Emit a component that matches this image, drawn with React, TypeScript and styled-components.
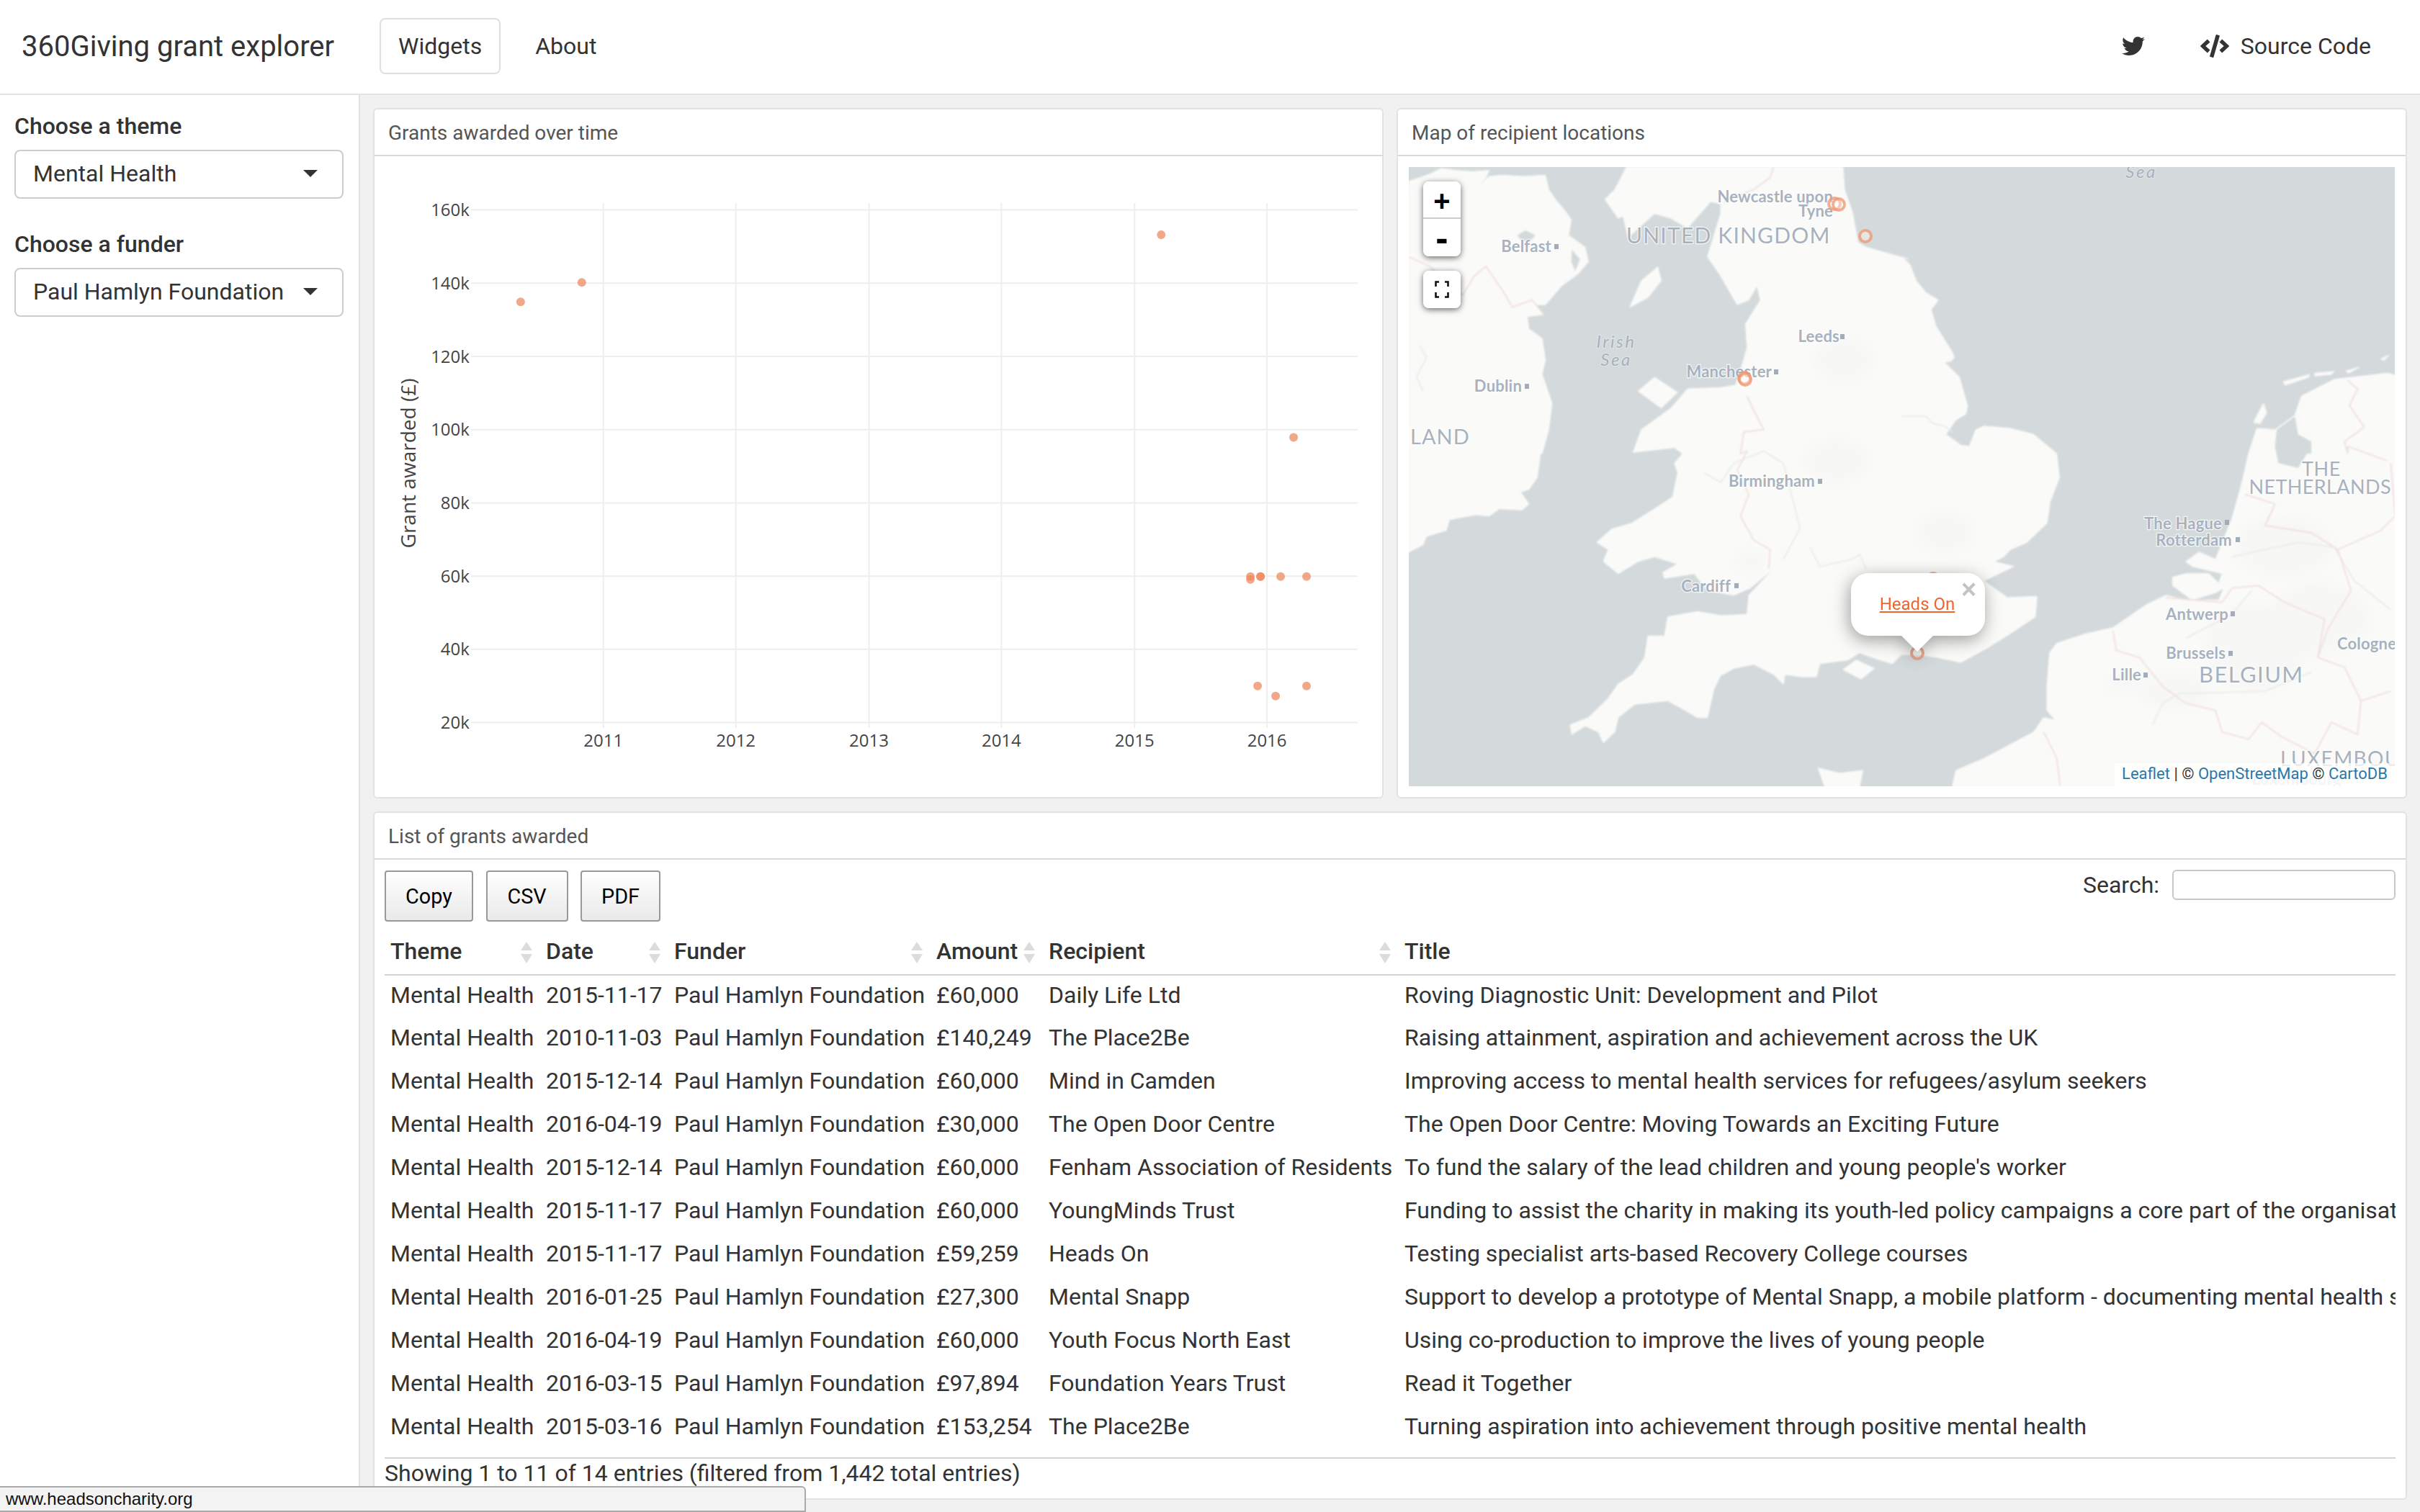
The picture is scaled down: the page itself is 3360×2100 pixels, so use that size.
import React from 'react';
import styled, { createGlobalStyle } from 'styled-components';
import { FaTwitter, FaCode } from 'react-icons/fa';

const GlobalStyle = createGlobalStyle`
  html, body { margin: 0; padding: 0; width: 3360px; height: 2100px; overflow: hidden; background: #fff; }
  * { box-sizing: border-box; }
  body { font-family: Roboto, "Liberation Sans", sans-serif; color: #333; font-size: 32px; }
`;

const Page = styled.div`width: 3360px; height: 2100px; display: flex; flex-direction: column; position: relative;`;
const Navbar = styled.header`
  height: 132px; flex: none; display: flex; align-items: center; padding: 0 42px 2px 30px;
  background: #fff; border-bottom: 2px solid #e2e2e2;
`;
const Brand = styled.div`font-size: 40px; color: #333; width: 497px; flex: none; line-height: 48px; padding-top: 1px;`;
const NavItem = styled.a<{ $active?: boolean; $mr?: number }>`
  font-size: 32px; line-height: 48px; height: 78px; display: flex; align-items: center; gap: 16px; padding: 0 24px; color: #333;
  border: 2px solid ${p => (p.$active ? '#dfdfdf' : 'transparent')}; border-radius: 8px; margin-right: ${p => p.$mr || 0}px;
  svg { fill: #333; }
`;
const NavSpacer = styled.div`flex: 1;`;
const Body = styled.div`flex: 1; display: flex; min-height: 0;`;
const Sidebar = styled.aside`width: 500px; flex: none; border-right: 2px solid #e2e2e2; background: #fff; padding: 20px 20px 0;`;
const Field = styled.div`margin-bottom: 40px;`;
const FieldLabel = styled.label`display: block; font-size: 32px; line-height: 46px; font-weight: 500; color: #333; margin-bottom: 10px;`;
const Select = styled.div`
  width: 457px; height: 68px; border: 2px solid #ccc; border-radius: 8px; background: #fff; padding: 0 26px 2px 24px;
  display: flex; align-items: center; justify-content: space-between; font-size: 32px; color: #333;
`;
const Caret = styled.span`width: 0; height: 0; border-left: 10px solid transparent; border-right: 10px solid transparent; border-top: 10px solid #333; margin-right: 8px;`;
const Main = styled.main`
  flex: 1; background: #f1f1f1; padding: 18px 18px 17px; display: grid; gap: 18px;
  grid-template-columns: 1fr 1fr; grid-template-rows: 959px 956px;
`;
const Card = styled.section<{ $wide?: boolean }>`
  background: #fff; border: 2px solid #e2e2e2; border-radius: 6px; display: flex; flex-direction: column; min-width: 0; min-height: 0;
  ${p => (p.$wide ? 'grid-column: 1 / span 2;' : '')}
`;
const CardHeader = styled.h2`
  margin: 0; flex: none; height: 65px; padding: 0 19px; font-size: 28px; font-weight: 400; color: #555;
  line-height: 66px; border-bottom: 2px solid #d9d9d9;
`;
const ChartSvg = styled.svg`flex: 1; display: block; width: 100%; min-height: 0;`;
const MapBody = styled.div`flex: 1; padding: 15px 15px 15px 15px; display: flex; min-height: 0;`;
const MapView = styled.div`flex: 1; position: relative; overflow: hidden; background: #d4dadc;`;
const MapSvg = styled.svg`position: absolute; inset: 0; width: 1370px; height: 860px; display: block;`;
const Controls = styled.div`position: absolute; left: 20px; top: 20px; width: 52px; display: flex; flex-direction: column; gap: 20px;`;
const ControlGroup = styled.div`background: #fff; border-radius: 8px; box-shadow: 0 2px 8px rgba(0,0,0,.6); display: flex; flex-direction: column; overflow: hidden;`;
const ControlButton = styled.button<{ $divider?: boolean; $size?: number }>`
  border: 0; padding: ${p => (p.$divider ? '4px' : '0')} 0 0; margin: 0; background: #fff; width: 52px; height: 52px; font-family: "Liberation Sans", sans-serif;
  font-size: ${p => p.$size || 40}px; font-weight: 700; color: #000; line-height: 52px;
  display: flex; align-items: center; justify-content: center;
  border-bottom: ${p => (p.$divider ? '2px solid #ccc' : '0')};
`;
const Popup = styled.div`
  position: absolute; left: 614px; top: 564px; width: 186px; height: 87px; background: #fff; border-radius: 24px;
  display: flex; align-items: center; justify-content: center; padding: 0 2px 0 0;
  filter: drop-shadow(-2px 6px 12px rgba(0,0,0,.38));
  &::after { content: ""; position: absolute; left: 70px; top: 87px; width: 0; height: 0; border-left: 22px solid transparent; border-right: 22px solid transparent; border-top: 22px solid #fff; }
`;
const PopupLink = styled.a`font-size: 24px; color: #f0652c; text-decoration: underline; line-height: 32px; margin-top: -2px;`;
const PopupClose = styled.span`position: absolute; right: 12px; top: 5px; font-family: "Liberation Sans", sans-serif; font-size: 36px; line-height: 36px; font-weight: 700; color: #c3c3c3;`;
const Attribution = styled.div`
  position: absolute; right: 0; bottom: 0; height: 32px; padding: 0 10px; background: rgba(255,255,255,.75);
  font-size: 22px; line-height: 30px; color: #333; white-space: nowrap;
`;
const AttribLink = styled.a`color: #2a78a8;`;
const TableBody = styled.div`flex: 1; padding: 15px 14px 0; display: flex; flex-direction: column; min-height: 0;`;
const Toolbar = styled.div`display: flex; justify-content: space-between; align-items: flex-start; height: 85px; flex: none;`;
const ButtonRow = styled.div`display: flex; gap: 17.5px;`;
const ExportButton = styled.button<{ $w: number }>`
  width: ${p => p.$w}px; height: 71px; border: 2px solid #999; border-radius: 4px; padding: 0; color: #000;
  background: linear-gradient(to bottom, #fff 0%, #e9e9e9 100%); font-family: Roboto, sans-serif; font-size: 28.8px;
`;
const SearchBox = styled.label`display: flex; align-items: center; gap: 18px; font-size: 32px; color: #333; margin-top: -1px;`;
const SearchInput = styled.input`width: 310px; height: 42px; border: 2px solid #c8c8c8; border-radius: 6px; background: #fff;`;
const TableClip = styled.div`flex: none; height: 732px; overflow: hidden; border-bottom: 2px solid #d4d4d4;`;
const Table = styled.table`width: 2792px; table-layout: fixed; border-collapse: collapse; font-size: 32px; color: #333;`;
const HeadCell = styled.th<{ $w?: number; $sort?: boolean }>`
  ${p => (p.$w ? `width: ${p.$w}px;` : '')}
  position: relative; height: 60px; padding: 0 8px 6px; text-align: left; font-weight: 500; color: #333; border-bottom: 2px solid #d4d4d4; white-space: nowrap;
  ${p => p.$sort ? `
    &::before { content: ""; position: absolute; right: 11px; top: 14px; width: 0; height: 0; border-left: 8px solid transparent; border-right: 8px solid transparent; border-bottom: 12px solid #dcdcdc; }
    &::after { content: ""; position: absolute; right: 11px; top: 31px; width: 0; height: 0; border-left: 8px solid transparent; border-right: 8px solid transparent; border-top: 13px solid #dcdcdc; }
  ` : ''}
`;
const Cell = styled.td`height: 60px; padding: 0 8px 6px; white-space: nowrap; overflow: hidden;`;
const Footer = styled.div`font-size: 32px; line-height: 40px; padding-top: 0; color: #333;`;
const StatusBar = styled.div`
  position: absolute; left: 0; bottom: 0; width: 1119px; height: 36px; background: #f3f3f3; border: 2px solid #aaa; border-left: 0; border-radius: 0 6px 0 0;
  font-family: "Liberation Sans", sans-serif; font-size: 24px; line-height: 32px; color: #111; padding-left: 8px;
`;

/* ---------- chart ---------- */
const yTicks = [160, 140, 120, 100, 80, 60, 40, 20];
const yOf = (v: number) => 291.5 + ((160 - v) / 20) * 101.6;
const xTicks: [string, number][] = [['2011', 838], ['2012', 1022], ['2013', 1207], ['2014', 1391], ['2015', 1576], ['2016', 1760]];
const dots: [number, number][] = [[723, 419], [808, 392], [1613, 326], [1797, 607], [1737, 800], [1737, 804], [1751, 800], [1751, 800], [1779, 800], [1815, 800], [1747, 952], [1772, 966], [1815, 952]];

const Chart = () => (
  <ChartSvg viewBox="520 217 1400 889" preserveAspectRatio="none">
    {xTicks.map(([l, x]) => <line key={l} x1={x} x2={x} y1={282} y2={1010} stroke="#eee" strokeWidth={2} />)}
    {yTicks.map(v => <line key={v} x1={654} x2={1886} y1={yOf(v)} y2={yOf(v)} stroke="#eee" strokeWidth={2} />)}
    {yTicks.map(v => <text key={v} x={652} y={yOf(v) + 8.5} textAnchor="end" fontFamily="'Open Sans', sans-serif" fontSize={24} fill="#444">{v}k</text>)}
    {xTicks.map(([l, x]) => <text key={l} x={x} y={1036} textAnchor="middle" fontFamily="'Open Sans', sans-serif" fontSize={24} fill="#444">{l}</text>)}
    <text transform="translate(577 643) rotate(-90)" textAnchor="middle" fontFamily="'Open Sans', sans-serif" fontSize={28} fill="#444">Grant awarded (£)</text>
    {dots.map(([x, y], i) => <circle key={i} cx={x} cy={y} r={6} fill="#ef8a62" opacity={0.75} />)}
  </ChartSvg>
);

/* ---------- map ---------- */
type Org = [number, number];
const Z3: Org = [1930, 130], Z4: Org = [2640, 130], Z5: Org = [1930, 620], Z6: Org = [2640, 620];
const pts = (...segs: [Org, string][]) =>
  segs.map(([o, s]) => s.trim().split(/\s+/).map(p => {
    const [x, y] = p.split(',').map(Number);
    return `${(o[0] + x * 0.459).toFixed(1)},${(o[1] + y / 3).toFixed(1)}`;
  }).join(' ')).join(' ');

const land: [Org, string][][] = [
  [[Z3, '57,365 90,350 120,335 155,312 200,320 250,325 300,320 290,350 265,385 240,410 225,420 275,375 300,345 340,340 400,345 470,340 480,400 500,440 530,490 548,525 540,590 590,640 600,700 570,750 520,800 470,880 440,880 465,920 415,930 420,980 460,1020 470,1110 460,1170 490,1290 480,1400 460,1500'],
   [Z5, '455,30 445,130 420,180 395,190 420,240 400,265 330,260 300,290 260,285 180,305 170,350 110,375 100,410 57,440 0,460 0,300']],
  [[Z3, '1370,305 1375,400 1400,500 1415,620 1440,640 1568,690'],
   [Z4, '0,680 25,710 45,780 75,830 112,860 90,900 105,970 155,1080 160,1100 150,1115 130,1120 175,1180 200,1300 195,1335 165,1360 135,1420 180,1465 205,1470 225,1400 250,1385 330,1395 400,1420 470,1500'],
   [Z6, '478,130 450,230 440,320 380,400 330,430 310,460 280,480 340,500 250,560 300,610 320,630 410,625 405,710 340,770 260,840 180,900 110,880 50,868 0,868'],
   [Z5, '1520,905 1470,885 1420,860 1385,890 1300,905 1290,960 1240,960 1195,950 1190,990 1160,950 1100,908 1040,925 1000,955 980,1010 960,1130 930,1130 880,1090 840,1060 740,1075 690,1130 680,1190 645,1235 630,1190 590,1165 550,1200 545,1160 600,1130 660,1050 690,990 735,950 770,880 780,790 830,790 840,710 930,688 1000,705 1080,700 1085,620 1160,510 1090,590 1040,620 960,600 920,530 830,550 825,525 870,490 800,460 750,480 690,530 645,480 660,430 625,400 670,345 730,320 800,260 855,210 870,110 860,70 885,30 860,5'],
   [Z3, '735,1495 760,1400 850,1310 900,1230 1000,1225 1045,1215 1065,1130 1080,1060 1075,960 1120,860 1110,800 1085,860 1050,880 1000,760 960,680 1000,500 1000,460 970,450 900,560 850,520 800,500 720,600 705,510 690,520 650,440 680,400 715,305']],
  [[Z3, '750,1240 800,1182 870,1245 820,1310']],
  [[Z3, '725,890 760,780 810,722 820,780 780,850']],
  [[Z5, '1370,930 1410,890 1465,925 1425,970']],
  [[Z5, '1295,1340 1360,1362 1430,1350 1420,1420 1315,1420']],
  [[Z6, '150,1440 165,1350 250,1300 400,1190 430,1130 465,1140 440,1100 440,1000 448,860 470,820 560,780 640,755 740,660 800,620 860,640 960,640 975,590 950,610 880,640 860,620 820,580 820,545 860,530 930,530 960,570 970,530 880,500 860,480 900,440 950,470 1000,300 1030,150 1050,30'],
   [Z4, '1050,1500 1075,1395 1130,1400 1190,1340 1210,1260 1310,1190 1470,1165 1500,1175'],
   [Z6, '1560,0 1560,1440']],
  [[Z4, '1065,1370 1095,1290 1105,1330 1085,1375']],
  [[Z4, '1155,1200 1235,1170 1232,1182 1160,1215']],
  [[Z4, '1250,1165 1310,1158 1300,1170 1250,1177']],
  [[Z4, '1345,1155 1385,1140 1352,1165']],
  [[Z4, '1450,1105 1475,1090 1460,1112']],
];
const inlandWater: [Org, string][][] = [
  [[Z4, '1135,1400 1190,1345 1200,1420 1240,1450 1240,1500 1145,1500'], [Z6, '1240,0 1200,90 1140,70 1130,0']],
  [[Z3, '385,590 410,570 440,590 420,620 395,610']],
  [[Z3, '550,650 575,690 560,740 548,700']],
];
const borders: [Org, string][][] = [
  [[Z3, '57,680 120,720 150,760 220,840 255,760 290,720 340,820 370,890 430,860 465,920']],
  [[Z3, '1160,305 1150,350 1100,400 1010,450']],
  [[Z3, '1080,1260 1100,1320 1130,1400 1070,1410 1060,1500'], [Z5, '1080,20 1050,100 1085,200 1060,290 1100,390 1150,430 1145,510']],
  [[Z6, '640,770 650,850 720,880 790,1000 860,1070 950,1100 970,1190 1050,1220 1090,1150 1150,1210 1250,1280 1300,1150 1380,1200 1390,1060 1480,1020']],
  [[Z6, '800,630 970,650 1000,590 1080,580 1160,650 1280,720 1260,880 1340,920 1390,1060']],
  [[Z6, '1480,70 1494,290 1450,350 1320,430 1360,600 1290,760 1260,880']],
  [[Z4, '1350,1195 1380,1230 1355,1300 1400,1390 1340,1450 1350,1500'], [Z6, '1350,0 1470,60']],
  [[Z6, '1040,200 1130,240 1100,330 1240,360 1320,430']],
  [[Z6, '430,1190 470,1300 480,1415']],
];
const rivers: [Org, string][][] = [
  [[Z6, '1000,460 1100,430 1200,400 1310,420 1370,560 1480,680']],
  [[Z6, '860,800 900,770 1000,700 1060,600']],
  [[Z6, '760,1160 790,1070 840,1030 1100,1020 1240,940']],
  [[Z4, '0,1345 40,1345 75,1345 95,1375 130,1385 155,1410']],
  [[Z5, '950,110 1000,150 1040,70 1130,20 1190,70 1240,340 1190,470']],
  [[Z5, '1270,420 1300,500 1400,470 1420,450 1440,510']],
  [[Z3, '90,1050 110,1100 80,1180 100,1240']],
];
const urban: [number, number, number, number][] = [
  [2560, 500, 40, 30], [2550, 640, 45, 30], [2700, 740, 38, 28], [3130, 900, 70, 60], [3020, 960, 50, 25], [2950, 950, 28, 14], [3220, 860, 70, 50], [3170, 760, 70, 40], [2430, 780, 22, 16],
];

type Lab = { t: string; x: number; y: number; a?: 'start' | 'end' | 'middle'; s?: number; ls?: number; it?: boolean; op?: number; big?: boolean };
const labels: Lab[] = [
  { t: 'Newcastle upon', x: 2545, y: 281, a: 'end' },
  { t: 'Tyne', x: 2545, y: 301, a: 'end' },
  { t: 'UNITED KINGDOM', x: 2258, y: 338, s: 30, ls: 1.2, big: true },
  { t: 'Belfast', x: 2154, y: 350, a: 'end' },
  { t: 'Leeds', x: 2554, y: 475, a: 'end' },
  { t: 'Irish', x: 2244, y: 483, a: 'middle', s: 24, ls: 2.5, it: true },
  { t: 'Sea', x: 2244, y: 508, a: 'middle', s: 24, ls: 2.5, it: true },
  { t: 'Manchester', x: 2460, y: 524, a: 'end' },
  { t: 'Dublin', x: 2113, y: 544, a: 'end' },
  { t: 'LAND', x: 1958, y: 617, s: 29, ls: 1, big: true },
  { t: 'Sea', x: 2973, y: 247, a: 'middle', s: 24, ls: 2.5, it: true },
  { t: 'Birmingham', x: 2520, y: 676, a: 'end' },
  { t: 'Cardiff', x: 2403, y: 822, a: 'end' },
  { t: 'THE', x: 3223, y: 661, a: 'middle', s: 27, ls: 0.6, big: true },
  { t: 'NETHERLANDS', x: 3320, y: 686, a: 'end', s: 27, ls: 0.4, big: true },
  { t: 'The Hague', x: 3085, y: 735, a: 'end' },
  { t: 'Rotterdam', x: 3099, y: 758, a: 'end' },
  { t: 'Antwerp', x: 3094, y: 861, a: 'end' },
  { t: 'Cologne', x: 3245, y: 902 },
  { t: 'Brussels', x: 3090, y: 915, a: 'end' },
  { t: 'Lille', x: 2973, y: 945, a: 'end' },
  { t: 'BELGIUM', x: 3053, y: 948, s: 31, ls: 1.4, big: true },
  { t: 'LUXEMBOURG', x: 3166, y: 1064, s: 28, ls: 1.4, big: true },
  { t: 'Luxembourg', x: 3127, y: 1090, op: 0.5 },
];
const cityDots: [number, number][] = [[2161, 342], [2558, 467], [2466, 516], [2120, 536], [2527, 668], [2411, 813], [3092, 725], [3107, 749], [3100, 852], [3097, 907], [2979, 937]];
const markers: [number, number][] = [[2547, 283], [2553, 284], [2590, 328], [2422, 525], [2423, 527], [2684, 804], [2662, 907]];

const MapDrawing = () => (
  <MapSvg viewBox="1956 232 1370 860" preserveAspectRatio="none">
    <defs>
      <filter id="soft" x="-2%" y="-2%" width="104%" height="104%"><feGaussianBlur stdDeviation="0.9" /></filter>
      <filter id="softer" x="-20%" y="-20%" width="140%" height="140%"><feGaussianBlur stdDeviation="8" /></filter>
    </defs>
    <g filter="url(#soft)">
      {land.map((l, i) => <polygon key={i} points={pts(...l)} fill="#fafaf8" stroke="#fafaf8" strokeWidth={1} strokeLinejoin="round" />)}
      {urban.map(([x, y, rx, ry], i) => <ellipse key={i} cx={x} cy={y} rx={rx} ry={ry} fill="#f7f7f5" filter="url(#softer)" />)}
      {inlandWater.map((l, i) => <polygon key={i} points={pts(...l)} fill="#d4dadc" />)}
      {rivers.map((l, i) => <polyline key={i} points={pts(...l)} fill="none" stroke="#e6e9eb" strokeWidth={1.6} />)}
      {borders.map((l, i) => <polyline key={i} points={pts(...l)} fill="none" stroke="#efdedd" strokeWidth={1.8} strokeLinejoin="round" />)}
    </g>
    {labels.map(l => (
      <text key={l.t + l.x} x={l.x} y={l.y} textAnchor={l.a || 'start'} fontFamily="Lato, 'Open Sans', sans-serif" fontSize={l.s || 22}
        letterSpacing={l.ls || 0.2} fontStyle={l.it ? 'italic' : 'normal'} fontWeight={l.big || l.it ? 400 : 700} fill="#a8b2be" opacity={l.op || 1}
        stroke="#fff" strokeOpacity={l.it ? 0.25 : 0.75} strokeWidth={2.5} paintOrder="stroke">{l.t}</text>
    ))}
    {cityDots.map(([x, y], i) => <rect key={i} x={x - 3} y={y - 3} width={6} height={7} fill="#a3adba" />)}
    {markers.map(([x, y], i) => <circle key={i} cx={x} cy={y} r={8} fill="#fff" fillOpacity={0.35} stroke="#f0946e" strokeOpacity={0.75} strokeWidth={4} />)}
  </MapSvg>
);

/* ---------- data ---------- */
const rows: [string, string, string, string][] = [
  ['2015-11-17', '£60,000', 'Daily Life Ltd', 'Roving Diagnostic Unit: Development and Pilot'],
  ['2010-11-03', '£140,249', 'The Place2Be', 'Raising attainment, aspiration and achievement across the UK'],
  ['2015-12-14', '£60,000', 'Mind in Camden', 'Improving access to mental health services for refugees/asylum seekers'],
  ['2016-04-19', '£30,000', 'The Open Door Centre', 'The Open Door Centre: Moving Towards an Exciting Future'],
  ['2015-12-14', '£60,000', 'Fenham Association of Residents', "To fund the salary of the lead children and young people's worker"],
  ['2015-11-17', '£60,000', 'YoungMinds Trust', 'Funding to assist the charity in making its youth-led policy campaigns a core part of the organisation'],
  ['2015-11-17', '£59,259', 'Heads On', 'Testing specialist arts-based Recovery College courses'],
  ['2016-01-25', '£27,300', 'Mental Snapp', 'Support to develop a prototype of Mental Snapp, a mobile platform - documenting mental health services'],
  ['2016-04-19', '£60,000', 'Youth Focus North East', 'Using co-production to improve the lives of young people'],
  ['2016-03-15', '£97,894', 'Foundation Years Trust', 'Read it Together'],
  ['2015-03-16', '£153,254', 'The Place2Be', 'Turning aspiration into achievement through positive mental health'],
];

export default function App() {
  return (
    <Page>
      <GlobalStyle />
      <Navbar>
        <Brand>360Giving grant explorer</Brand>
        <NavItem $active $mr={22}>Widgets</NavItem>
        <NavItem>About</NavItem>
        <NavSpacer />
        <NavItem $mr={25}><FaTwitter size={32} /></NavItem>
        <NavItem><FaCode size={40} />Source Code</NavItem>
      </Navbar>
      <Body>
        <Sidebar>
          <Field>
            <FieldLabel>Choose a theme</FieldLabel>
            <Select>Mental Health<Caret /></Select>
          </Field>
          <Field>
            <FieldLabel>Choose a funder</FieldLabel>
            <Select>Paul Hamlyn Foundation<Caret /></Select>
          </Field>
        </Sidebar>
        <Main>
          <Card>
            <CardHeader>Grants awarded over time</CardHeader>
            <Chart />
          </Card>
          <Card>
            <CardHeader>Map of recipient locations</CardHeader>
            <MapBody>
              <MapView>
                <MapDrawing />
                <Controls>
                  <ControlGroup>
                    <ControlButton $divider>+</ControlButton>
                    <ControlButton $size={52}>-</ControlButton>
                  </ControlGroup>
                  <ControlGroup>
                    <ControlButton>
                      <svg width="20" height="24" viewBox="0 0 20 24" fill="none" stroke="#111" strokeWidth="2.6">
                        <path d="M1.5 8V1.5H6M14 1.5h4.5V8M18.5 16v6.5H14M6 22.5H1.5V16" />
                      </svg>
                    </ControlButton>
                  </ControlGroup>
                </Controls>
                <Popup>
                  <PopupLink>Heads On</PopupLink>
                  <PopupClose>×</PopupClose>
                </Popup>
                <Attribution>
                  <AttribLink>Leaflet</AttribLink> | © <AttribLink>OpenStreetMap</AttribLink> © <AttribLink>CartoDB</AttribLink>
                </Attribution>
              </MapView>
            </MapBody>
          </Card>
          <Card $wide>
            <CardHeader>List of grants awarded</CardHeader>
            <TableBody>
              <Toolbar>
                <ButtonRow>
                  <ExportButton $w={123}>Copy</ExportButton>
                  <ExportButton $w={114}>CSV</ExportButton>
                  <ExportButton $w={111}>PDF</ExportButton>
                </ButtonRow>
                <SearchBox>Search:<SearchInput /></SearchBox>
              </Toolbar>
              <TableClip>
                <Table>
                  <thead>
                    <tr>
                      <HeadCell $w={216} $sort>Theme</HeadCell>
                      <HeadCell $w={178} $sort>Date</HeadCell>
                      <HeadCell $w={364} $sort>Funder</HeadCell>
                      <HeadCell $w={156} $sort>Amount</HeadCell>
                      <HeadCell $w={494} $sort>Recipient</HeadCell>
                      <HeadCell>Title</HeadCell>
                    </tr>
                  </thead>
                  <tbody>
                    {rows.map((r, i) => (
                      <tr key={i}>
                        <Cell>Mental Health</Cell>
                        <Cell>{r[0]}</Cell>
                        <Cell>Paul Hamlyn Foundation</Cell>
                        <Cell>{r[1]}</Cell>
                        <Cell>{r[2]}</Cell>
                        <Cell>{r[3]}</Cell>
                      </tr>
                    ))}
                  </tbody>
                </Table>
              </TableClip>
              <Footer>Showing 1 to 11 of 14 entries (filtered from 1,442 total entries)</Footer>
            </TableBody>
          </Card>
        </Main>
      </Body>
      <StatusBar>www.headsoncharity.org</StatusBar>
    </Page>
  );
}
